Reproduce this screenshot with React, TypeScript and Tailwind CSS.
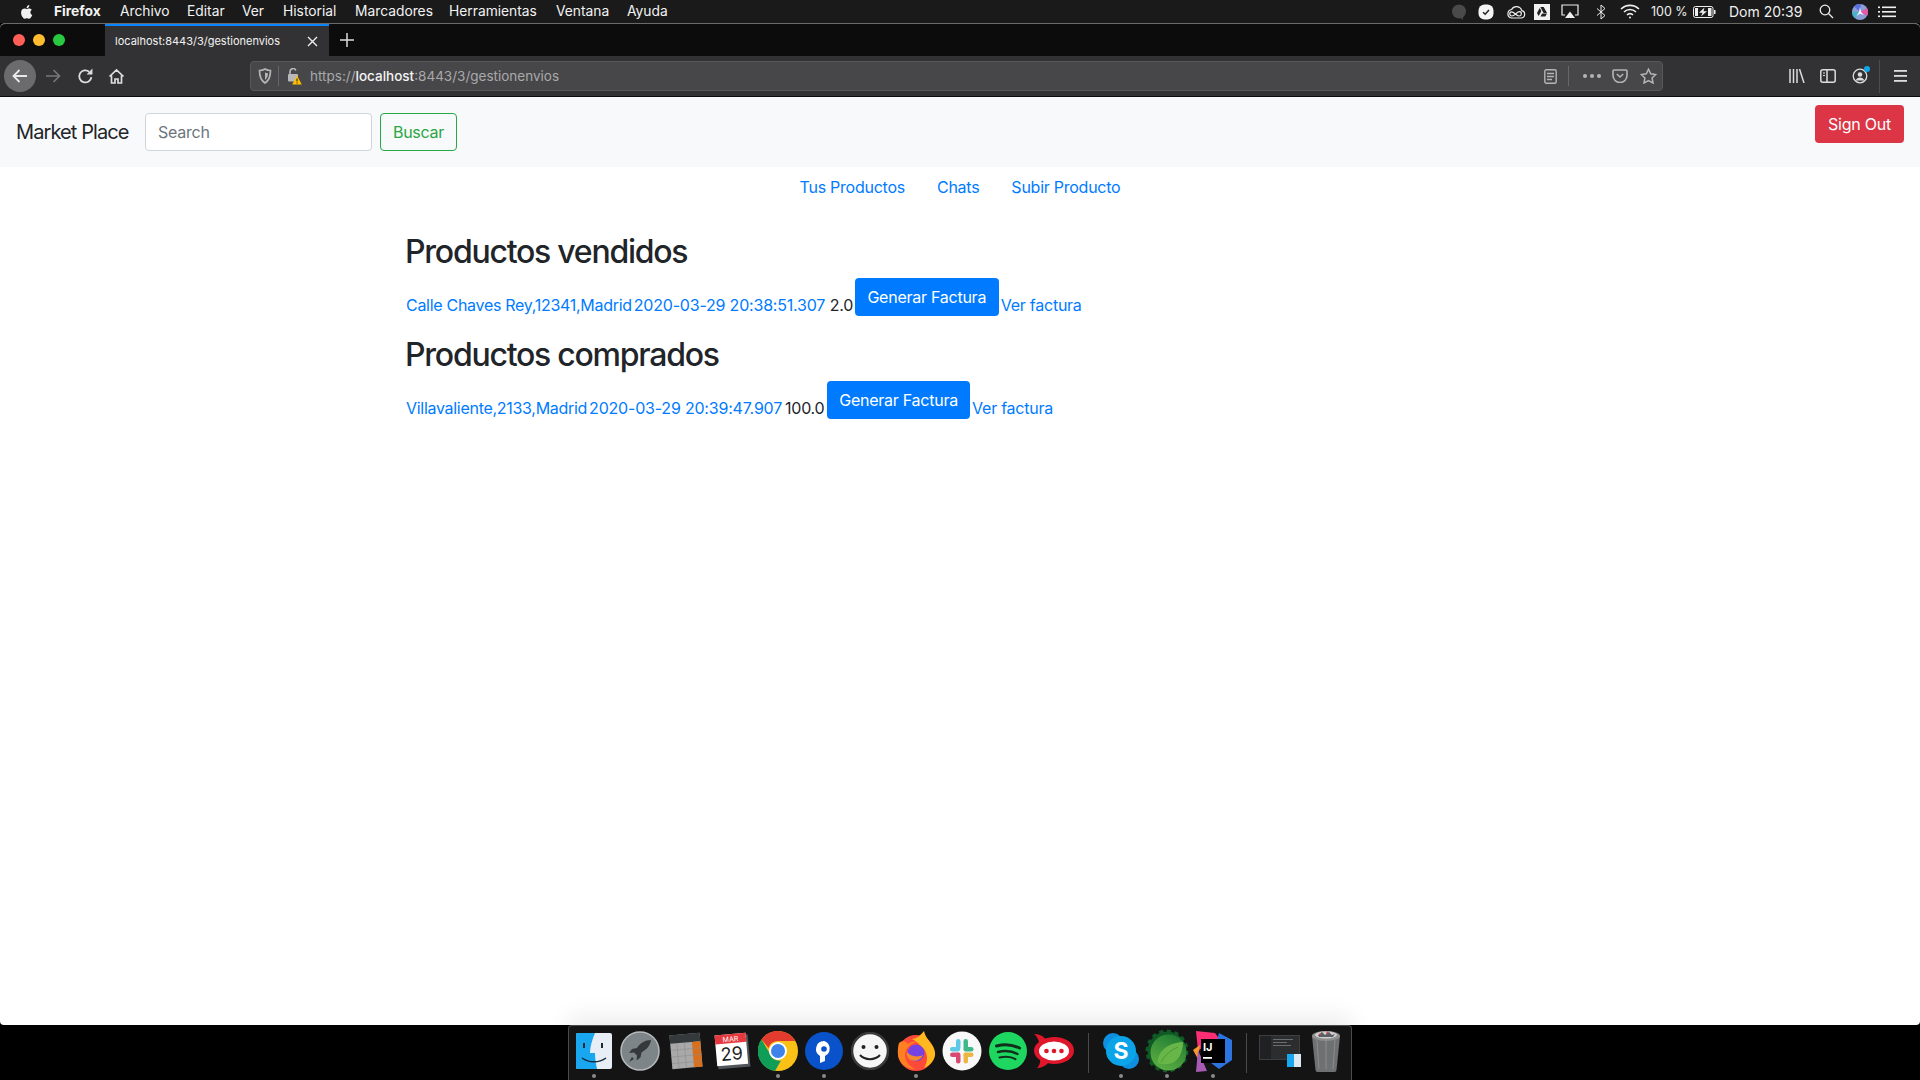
import React from 'react';

const MENU = [
  { label: 'Firefox', cls: 'w-[66px] font-bold' },
  { label: 'Archivo', cls: 'w-[67px]' },
  { label: 'Editar', cls: 'w-[55px]' },
  { label: 'Ver', cls: 'w-[41px]' },
  { label: 'Historial', cls: 'w-[72px]' },
  { label: 'Marcadores', cls: 'w-[94px]' },
  { label: 'Herramientas', cls: 'w-[107px]' },
  { label: 'Ventana', cls: 'w-[71px]' },
  { label: 'Ayuda', cls: 'w-[60px]' },
];

const Apple = () => (
  <svg width="16" height="18" viewBox="0 0 24 24" fill="#f2f2f2">
    <path d="M17.05 12.54c-.03-2.6 2.12-3.85 2.22-3.91-1.21-1.77-3.09-2.01-3.76-2.04-1.6-.16-3.12.94-3.93.94-.81 0-2.06-.92-3.39-.89-1.74.03-3.35 1.01-4.25 2.57-1.81 3.14-.46 7.8 1.3 10.35.86 1.25 1.89 2.65 3.24 2.6 1.3-.05 1.79-.84 3.36-.84 1.57 0 2.01.84 3.39.81 1.4-.02 2.28-1.27 3.14-2.53.99-1.45 1.4-2.85 1.42-2.93-.03-.01-2.72-1.04-2.74-4.13zM14.47 4.9c.72-.87 1.2-2.08 1.07-3.28-1.03.04-2.28.69-3.02 1.55-.66.77-1.24 2-1.09 3.18 1.15.09 2.32-.58 3.04-1.45z" />
  </svg>
);

const StatusIcons = () => (
  <div className="flex items-center h-full text-[#f0f0f0]">
    <svg className="w-[16px] h-[16px] mr-[11px]" viewBox="0 0 16 16"><circle cx="8" cy="7.500" r="7" fill="#4a4a4a" /><path d="M8 12l4 4v-6z" fill="#4a4a4a" /></svg>
    <svg className="w-[16px] h-[16px] mr-[12px]" viewBox="0 0 16 16"><rect x="0.500" y="0.500" width="15" height="15" rx="6" fill="#f4f4f4" /><path d="M5 8.200l2.200 2L11 6" fill="none" stroke="#222" strokeWidth="1.500" /></svg>
    <svg className="w-[20px] h-[14px] mr-[8px]" viewBox="0 0 20 14" fill="none" stroke="#eee" strokeWidth="1.200"><path d="M5.500 13h9.500a3.700 3.700 0 0 0 .8-7.300A5.500 5.500 0 0 0 5.600 4.500 4.300 4.300 0 0 0 5.500 13z" /><path d="M5.800 11c-2.400 0-3-3.700-.3-4.200 2.500-.4 4.500 4.200 7.500 4.200 2.800 0 3.200-4 .6-4.400-2.600-.4-4.600 4.400-7.800 4.400z" /></svg>
    <svg className="w-[16px] h-[16px] mr-[11px]" viewBox="0 0 16 16"><rect width="16" height="16" fill="#f2f2f2" /><path d="M6.300 3h3.400l3.300 6H9.600zM5.700 4l1.700 3-2.700 5-1.700-3zM6.500 12.500l1.600-3H13l-1.700 3z" fill="#222" /></svg>
    <svg className="w-[18px] h-[15px] mr-[17px]" viewBox="0 0 18 15"><path d="M4 11H1V1h16v10h-3" fill="none" stroke="#eee" strokeWidth="1.200" /><path d="M9 7.500l5 6.500H4z" fill="#eee" /></svg>
    <svg className="w-[10px] h-[16px] mr-[14px]" viewBox="0 0 10 16" fill="none" stroke="#eee" strokeWidth="1"><path d="M1 4.500l8 7L5 15V1l4 3.500-8 7" /></svg>
    <svg className="w-[20px] h-[15px] mr-[10px]" viewBox="0 0 20 15" fill="none" stroke="#eee" strokeWidth="1.600"><path d="M1 5a13 13 0 0 1 18 0M4 8a8.500 8.500 0 0 1 12 0M7 11a4 4 0 0 1 6 0" /><circle cx="10" cy="13.500" r="1" fill="#eee" stroke="none" /></svg>
    <span className="text-[12.500px] w-[42px] whitespace-nowrap ml-[1px] mt-[1px]">100 %</span>
    <svg className="w-[23px] h-[12px] mr-[13px]" viewBox="0 0 23 12"><rect x="0.500" y="0.500" width="19.500" height="11" rx="2" fill="none" stroke="#eee" /><rect x="21" y="4" width="1.500" height="4" fill="#eee" /><path d="M11.500 1.500L6 6.800h3.500L8 10.500l6-5.300h-3.500z" fill="#eee" /><rect x="2" y="2" width="3" height="8" fill="#eee" /><rect x="15" y="2" width="3.500" height="8" fill="#eee" /></svg>
    <span className="text-[14px] w-[90px] whitespace-nowrap">Dom 20:39</span>
    <svg className="w-[15px] h-[15px] mr-[18px]" viewBox="0 0 15 15" fill="none" stroke="#eee" strokeWidth="1.300"><circle cx="6" cy="6" r="4.800" /><path d="M9.500 9.500L14 14" /></svg>
    <svg className="w-[16px] h-[16px] mr-[10px]" viewBox="0 0 16 16">
      <circle cx="8" cy="8" r="8" fill="#8a9fd8" /><path d="M8 8L2 2.500A8 8 0 0 1 9 0z" fill="#5a6fe0" /><path d="M8 8l7-4a8 8 0 0 1 0 8z" fill="#e05aa8" /><path d="M8 8l-5 6.300A8 8 0 0 1 0 8z" fill="#48b0c8" /><path d="M8 3l1 5 3 3-4-1.500L4.500 12 7 8z" fill="#fff" />
    </svg>
    <svg className="w-[18px] h-[12px]" viewBox="0 0 18 12" fill="#f0f0f0"><rect x="0" y="0.500" width="2" height="1.600" /><rect x="4" y="0.500" width="14" height="1.600" /><rect x="0" y="5" width="2" height="1.600" /><rect x="4" y="5" width="14" height="1.600" /><rect x="0" y="9.500" width="2" height="1.600" /><rect x="4" y="9.500" width="14" height="1.600" /></svg>
  </div>
);

const Toolbar = () => (
  <div className="h-[41px] bg-[#323234] border-b border-[#0c0c0d] flex items-center shrink-0">
    <div className="w-[250px] flex items-center pl-[4px] h-full shrink-0">
      <div className="w-[32px] h-[32px] rounded-full bg-[#6b6b6e] flex items-center justify-center">
        <svg width="18" height="18" viewBox="0 0 18 18" fill="none" stroke="#e8e8e8" strokeWidth="1.800"><path d="M16 9H2.500M8.500 3L2.500 9l6 6" /></svg>
      </div>
      <svg className="ml-[8px]" width="18" height="18" viewBox="0 0 18 18" fill="none" stroke="#77777a" strokeWidth="1.700"><path d="M2 9h13.500M9.500 3l6 6-6 6" /></svg>
      <svg className="ml-[15px]" width="17" height="17" viewBox="0 0 16 16" fill="none" stroke="#ddd" strokeWidth="1.700"><path d="M13.500 8.500A5.700 5.700 0 1 1 11.500 3.500" /><path d="M14.500 .5v5.500H9z" fill="#ddd" stroke="none" /></svg>
      <svg className="ml-[14px]" width="17" height="17" viewBox="0 0 17 17" fill="none" stroke="#ddd" strokeWidth="1.700"><path d="M1.500 8.500l7-6.500 7 6.500M3.500 7.500V15h3.500v-4h3v4h3.500V7.500" /></svg>
    </div>
    <div className="w-[1413px] h-[30px] bg-[#474749] rounded-[4px] border border-[#58585a] flex items-center shrink-0">
      <svg className="ml-[7px]" width="14" height="16" viewBox="0 0 14 16" fill="none" stroke="#b4b4b6" strokeWidth="1.700"><path d="M1.500 2.500C4 2.500 5.500 2 7 1c1.500 1 3 1.500 5.500 1.500 0 6-1.500 10-5.500 12.500-4-2.500-5.500-6.500-5.500-12.500z" /><path d="M7 4.500c1 .5 2 .8 3 .8 0 3-.8 5-3 6.700z" fill="#b4b4b6" stroke="none" /></svg>
      <div className="w-px h-[20px] bg-[#66666a] ml-[6px]" />
      <div className="relative ml-[8px] w-[15px] h-[17px]">
        <svg width="12" height="14" viewBox="0 0 12 14" fill="none" stroke="#b8b8ba" strokeWidth="1.600"><rect x="1" y="6" width="10" height="7.500" rx="1" fill="#b8b8ba" stroke="none" /><path d="M3 6V3.500a3 3 0 0 1 5.800-1" /></svg>
        <svg className="absolute right-0 bottom-0" width="10" height="10" viewBox="0 0 10 10"><path d="M5 .5L9.800 9.500H.2z" fill="#ffbf00" /><path d="M5 3.500v3M5 7.500v1" stroke="#222" strokeWidth="1" /></svg>
      </div>
      <div className="ml-[8px] text-[13.500px] text-[#a9a9ac] whitespace-nowrap flex-1 mt-[1px]">
        https://<span className="text-[#f4f4f4] font-medium">localhost</span>:8443/3/gestionenvios
      </div>
      <svg width="13" height="15" viewBox="0 0 13 15" fill="none" stroke="#b4b4b6" strokeWidth="1.400" className="mr-[11px]"><rect x="0.800" y="0.800" width="11.400" height="13.400" rx="1.500" /><path d="M3 4.500h7M3 7.500h7M3 10.500h5" /></svg>
      <div className="w-px h-[20px] bg-[#66666a] mr-[14px]" />
      <div className="flex gap-[3px] mr-[11px]">
        <div className="w-[4px] h-[4px] rounded-full bg-[#b4b4b6]" />
        <div className="w-[4px] h-[4px] rounded-full bg-[#b4b4b6]" />
        <div className="w-[4px] h-[4px] rounded-full bg-[#b4b4b6]" />
      </div>
      <svg width="16" height="14" viewBox="0 0 16 14" fill="none" stroke="#b4b4b6" strokeWidth="1.600" className="mr-[12px]"><path d="M2 1h12a1 1 0 0 1 1 1v4.500a7 7 0 0 1-14 0V2a1 1 0 0 1 1-1z" /><path d="M4.800 5L8 8l3.200-3" /></svg>
      <svg width="17" height="16" viewBox="0 0 17 16" fill="none" stroke="#b4b4b6" strokeWidth="1.500" className="mr-[5px]"><path d="M8.500 1.200l2.200 4.600 5 .7-3.600 3.500.9 5-4.500-2.400L4 15l.9-5L1.300 6.500l5-.7z" /></svg>
    </div>
    <div className="flex items-center flex-1 h-full">
      <svg className="ml-[126px]" width="16" height="14" viewBox="0 0 16 14" fill="none" stroke="#ddd" strokeWidth="1.500"><path d="M1 0v14M4.500 0v14M8 0v14M10.500 0l4.500 14" /></svg>
      <svg className="ml-[15px]" width="16" height="14" viewBox="0 0 16 14" fill="none" stroke="#ddd" strokeWidth="1.500"><rect x="0.800" y="0.800" width="14.400" height="12.400" rx="2" /><path d="M7 1v12" /><path d="M3 4h2M3 6.500h2" strokeWidth="1" /></svg>
      <div className="relative ml-[16px] w-[16px] h-[16px]">
        <svg width="16" height="16" viewBox="0 0 16 16" fill="none" stroke="#ddd" strokeWidth="1.300"><circle cx="8" cy="8" r="6.800" /><circle cx="8" cy="6.500" r="2.300" fill="#ddd" stroke="none" /><path d="M3.500 12.500c1-2 2.500-3 4.500-3s3.500 1 4.500 3" fill="#ddd" stroke="none" /></svg>
        <div className="absolute -top-[2px] -right-[2px] w-[6px] h-[6px] rounded-full bg-[#0ea5e9]" />
      </div>
      <div className="w-px h-[33px] bg-[#4c4c4f] ml-[11px]" />
      <svg className="ml-[14px]" width="13" height="12" viewBox="0 0 13 12" fill="#ddd"><rect width="13" height="1.800" /><rect y="5" width="13" height="1.800" /><rect y="10" width="13" height="1.800" /></svg>
    </div>
  </div>
);

// dock icons
const Finder = () => (
  <svg width="36" height="36" viewBox="0 0 36 36">
    <rect width="36" height="36" rx="2" fill="#e8eef6" />
    <path d="M0 2a2 2 0 0 1 2-2h17c-3 7-5 14-5 20h5c0 6 1 11 2 16H2a2 2 0 0 1-2-2z" fill="#19a7f0" />
    <path d="M8 10v5M26 10v5" stroke="#1a2a3a" strokeWidth="2" />
    <path d="M6 25c7 5 17 5 24 0" stroke="#1a2a3a" strokeWidth="1.500" fill="none" />
  </svg>
);
const Launchpad = () => (
  <svg width="40" height="40" viewBox="0 0 40 40">
    <circle cx="20" cy="20" r="19" fill="#7e8589" stroke="#b6babc" strokeWidth="1.500" />
    <path d="M31 9c-6 0-11 3-14 8l-5 1-3 4 5-.5 3 3-.5 5 4-3 1-5c5-3 9-7 9.500-12.500z" fill="#35393c" />
    <path d="M12 26l-3 5 5-3z" fill="#35393c" />
  </svg>
);
const Calculator = () => (
  <svg width="34" height="38" viewBox="0 0 36 40" style={{ transform: 'rotate(-5deg)' }}>
    <rect x="2" y="2" width="32" height="36" fill="#a9a9a9" />
    <rect x="2" y="2" width="32" height="9" fill="#34393b" />
    <rect x="25" y="11" width="9" height="27" fill="#d9701e" />
    <path d="M9 11v27M17 11v27M25 18h9M25 25h9M25 32h9M2 18h23M2 25h23M2 32h23" stroke="#8d8d8d" strokeWidth="0.600" />
  </svg>
);
const Calendar = () => (
  <svg width="36" height="38" viewBox="0 0 36 38" style={{ transform: 'rotate(-5deg)' }}>
    <rect x="3" y="4" width="32" height="32" fill="#50565c" />
    <rect x="2" y="2" width="31" height="31" fill="#fff" />
    <rect x="2" y="2" width="31" height="9" fill="#e5393f" />
    <text x="17.500" y="9.500" textAnchor="middle" fontSize="7" fill="#fff" fontFamily="Inter, sans-serif">MAR</text>
    <text x="17.500" y="28" textAnchor="middle" fontSize="18" fill="#222" fontFamily="Inter, sans-serif">29</text>
  </svg>
);
const Chrome = () => (
  <svg width="40" height="40" viewBox="0 0 40 40">
    <circle cx="20" cy="20" r="20" fill="#fbc116" />
    <path d="M20 0a20 20 0 0 1 17.300 10H20a10 10 0 0 0-9.500 7L3.500 8.500A20 20 0 0 1 20 0z" fill="#e33b2e" />
    <path d="M3.500 8.500l8 13.500a10 10 0 0 0 11.500 7.600L17 40A20 20 0 0 1 3.500 8.500z" fill="#109d58" />
    <circle cx="20" cy="20" r="9" fill="#fff" />
    <circle cx="20" cy="20" r="7" fill="#3f83ea" />
  </svg>
);
const Sourcetree = () => (
  <svg width="38" height="38" viewBox="0 0 38 38">
    <circle cx="19" cy="19" r="19" fill="#0a52c9" />
    <path d="M19 9a8 8 0 0 0-4 14.900V31l5 -2v-5.100A8 8 0 0 0 19 9z" fill="#fff" />
    <circle cx="19" cy="17" r="2.800" fill="#0a52c9" />
  </svg>
);
const Smile = () => (
  <svg width="38" height="38" viewBox="0 0 38 38">
    <circle cx="19" cy="19" r="18" fill="#f6f6f6" stroke="#3a3a3a" strokeWidth="2.500" />
    <circle cx="12.500" cy="15" r="2" fill="#222" />
    <circle cx="25.500" cy="15" r="2" fill="#222" />
    <path d="M9 23c5 5.500 15 5.500 20 0" fill="none" stroke="#222" strokeWidth="2" />
  </svg>
);
const Firefox = () => (
  <svg width="40" height="40" viewBox="0 0 40 40">
    <circle cx="20" cy="22" r="18" fill="#ff4a3a" />
    <path d="M28 0C24 5 20 8 16 8c4 2 8 6 12 10 4 6 4 12 0 19 7-3 12-9 11-16C38 13 30 9 28 0z" fill="#ffb81f" />
    <path d="M3 12c3-3 7-2 9 1 3-2 6-3 8-2-6 2-11 7-11 13 0 6 4 11 10 14C10 38 3 32 2 24c-.5-4 0-9 1-12z" fill="#ff8020" />
    <circle cx="20" cy="22" r="8.500" fill="#7543e3" />
    <path d="M11 21c3 4 10 6 16 3-2 5-8 7-12 5-3-1-5-5-4-8z" fill="#f58a2c" />
  </svg>
);
const Slack = () => (
  <svg width="40" height="40" viewBox="0 0 40 40">
    <circle cx="20" cy="20" r="19.500" fill="#f8f8f8" />
    <rect x="14" y="8" width="4.500" height="11" rx="2.250" fill="#5ec8e8" />
    <rect x="8" y="16" width="10" height="4.500" rx="2.250" fill="#5ec8e8" />
    <rect x="21.500" y="8" width="4.500" height="11" rx="2.250" fill="#3fb98a" />
    <rect x="21.500" y="16" width="10" height="4.500" rx="2.250" fill="#3fb98a" />
    <rect x="21.500" y="21.500" width="10" height="4.500" rx="2.250" fill="#ecb644" />
    <rect x="21.500" y="21.500" width="4.500" height="11" rx="2.250" fill="#ecb644" />
    <rect x="8" y="21.500" width="10" height="4.500" rx="2.250" fill="#d94a72" />
    <rect x="14" y="21.500" width="4.500" height="11" rx="2.250" fill="#d94a72" />
  </svg>
);
const Spotify = () => (
  <svg width="38" height="38" viewBox="0 0 38 38">
    <circle cx="19" cy="19" r="19" fill="#1ed760" />
    <g fill="none" stroke="#10301c" strokeLinecap="round">
      <path d="M7.500 14c7-2 16-1.500 23 2" strokeWidth="3" />
      <path d="M9 20c6-1.500 14-1 19.500 2" strokeWidth="2.500" />
      <path d="M10.500 25.500c5-1 12-.8 16 1.700" strokeWidth="2" />
    </g>
  </svg>
);
const RocketChat = () => (
  <svg width="42" height="36" viewBox="0 0 42 36">
    <path d="M21 4c11 0 20 5.500 20 13.500S32 31 21 31c-2 0-4-.3-6-.8C12 33 8 35 4 35c2.500-2.500 3.500-5.500 3-8C3 24.500 1 21 1 17.500 1 14 3 11 6 9 5 6 4 3 1 1c4 0 8 1 11 4.500 3-1 6-1.500 9-1.500z" fill="#e0162b" />
    <ellipse cx="21" cy="18" rx="15" ry="9.500" fill="#fff" />
    <circle cx="13.500" cy="18" r="2.300" fill="#e0162b" />
    <circle cx="21" cy="18" r="2.300" fill="#e0162b" />
    <circle cx="28.500" cy="18" r="2.300" fill="#e0162b" />
  </svg>
);
const Skype = () => (
  <svg width="36" height="36" viewBox="0 0 36 36">
    <circle cx="10" cy="10" r="10" fill="#0e8fe0" />
    <circle cx="26" cy="26" r="10" fill="#0e8fe0" />
    <circle cx="18" cy="18" r="15" fill="#0ca4e8" />
    <text x="18" y="26" textAnchor="middle" fontSize="23" fontWeight="700" fill="#fff" fontFamily="Inter, sans-serif">S</text>
  </svg>
);
const Spring = () => (
  <svg width="44" height="44" viewBox="0 0 44 44">
    <defs>
      <linearGradient id="springBody" x1="0.800" y1="0" x2="0.300" y2="1">
        <stop offset="0" stopColor="#1d7a32" />
        <stop offset="1" stopColor="#5dae42" />
      </linearGradient>
    </defs>
    <circle cx="22" cy="22" r="19.500" fill="#0f5a25" strokeDasharray="4 3.600" stroke="#0f5a25" strokeWidth="4" />
    <circle cx="23.500" cy="23.500" r="18" fill="url(#springBody)" />
    <path d="M13 34c-1-10 8-20 25-21 0 11-5 21-15 22-4 .4-8 0-10-1z" fill="#68b647" />
    <path d="M16 33c4-7 10-12 17-15" fill="none" stroke="#4a9a38" strokeWidth="1" />
  </svg>
);
const Intellij = () => (
  <svg width="42" height="42" viewBox="0 0 42 42">
    <path d="M4 1l19 2 6 8L6 20z" fill="#fe2e75" />
    <path d="M27 3l13 7v20l-13 9-8-6z" fill="#2c74e0" />
    <path d="M1 20l7-5-2 14z" fill="#fb9a2c" />
    <path d="M6 20l9 21-11 1z" fill="#a75bb4" />
    <rect x="9" y="9" width="24" height="24" fill="#000" />
    <text x="11" y="21" fontSize="11" fontWeight="700" fill="#fff" fontFamily="Inter, sans-serif">IJ</text>
    <rect x="11" y="27" width="9" height="1.800" fill="#fff" />
  </svg>
);
const WindowThumb = () => (
  <div className="relative w-[42px] h-[32px]">
    <div className="absolute left-0 top-0 w-[41px] h-[25px] bg-[#2b2d2f] border border-[#3c3e40] flex">
      <div className="w-[11px] h-full bg-[#202123]" />
      <div className="flex-1 flex flex-col gap-[2px] pl-[2px] pt-[3px]">
        <div className="w-[20px] h-px bg-[#6a6c6e]" />
        <div className="w-[14px] h-px bg-[#6a6c6e]" />
        <div className="w-[18px] h-px bg-[#6a6c6e]" />
      </div>
    </div>
    <div className="absolute right-0 bottom-0 w-[14px] h-[13px] bg-[#dfe9f4]">
      <div className="w-[7px] h-full bg-[#19a7f0]" />
    </div>
  </div>
);
const Trash = () => (
  <svg width="30" height="44" viewBox="0 0 30 44">
    <path d="M1 7h28l-3.500 34a2 2 0 0 1-2 2h-17a2 2 0 0 1-2-2z" fill="#6e7072" />
    <path d="M6 11l2 29M15 11v29M24 11l-2 29" stroke="#8b8d8f" strokeWidth="1" />
    <ellipse cx="15" cy="7" rx="14" ry="5" fill="#8c8e90" />
    <ellipse cx="15" cy="6" rx="11" ry="3.500" fill="#d5d0d0" />
    <path d="M7 6l4-3 3 3 4-3 3 3 3-1-2 3H8z" fill="#5a5f66" />
    <path d="M16 2l2 2-3 1zM9 4l2 2-3 0z" fill="#c0504d" />
  </svg>
);

const DockItem = ({ icon, dot }: { icon: React.ReactNode; dot?: boolean }) => (
  <div className="w-[46px] h-full relative flex items-center justify-center pb-[5px]">
    {icon}
    {dot && <div className="absolute bottom-[2px] left-[21px] w-[4px] h-[4px] rounded-full bg-[#8a8a8a]" />}
  </div>
);

const Dock = () => (
  <div className="h-[55px] bg-black flex justify-center shrink-0">
    <div className="w-[784px] h-full bg-[#141414] border-t border-x border-[#4a4a4a] rounded-t-[4px] flex items-center pl-[2px] shadow-[0_-8px_24px_rgba(0,0,0,0.08)]">
      <DockItem icon={<Finder />} dot />
      <DockItem icon={<Launchpad />} />
      <DockItem icon={<Calculator />} />
      <DockItem icon={<Calendar />} />
      <DockItem icon={<Chrome />} dot />
      <DockItem icon={<Sourcetree />} dot />
      <DockItem icon={<Smile />} />
      <DockItem icon={<Firefox />} dot />
      <DockItem icon={<Slack />} />
      <DockItem icon={<Spotify />} />
      <DockItem icon={<RocketChat />} />
      <div className="w-px h-[40px] bg-[#4a4a4a] ml-[11px] mr-[9px]" />
      <DockItem icon={<Skype />} dot />
      <DockItem icon={<Spring />} dot />
      <DockItem icon={<Intellij />} dot />
      <div className="w-px h-[40px] bg-[#4a4a4a] ml-[10px] mr-[10px]" />
      <DockItem icon={<WindowThumb />} />
      <DockItem icon={<Trash />} />
    </div>
  </div>
);

const Shipment = ({ address, date, total, dateCls, totalCls, btnCls, verCls }: { address: string; date: string; total: string; dateCls: string; totalCls: string; btnCls: string; verCls: string }) => (
  <div className="flex items-end h-[38px] mb-[19px] pl-[1px]">
    <a className="text-[#007bff] text-[16px] leading-[24px] mb-[-1px] tracking-[-0.29px] whitespace-nowrap">{address}</a>
    <a className={`text-[#007bff] text-[16px] leading-[24px] mb-[-1px] tracking-[-0.2px] whitespace-nowrap ${dateCls}`}>{date}</a>
    <span className={`text-[#212529] text-[16px] leading-[24px] mb-[-1px] tracking-[-0.25px] ${totalCls}`}>{total}</span>
    <button className={`bg-[#007bff] text-white text-[16px] h-[38px] rounded-[4px] self-start tracking-[-0.25px] whitespace-nowrap ${btnCls}`}>Generar Factura</button>
    <a className={`text-[#007bff] text-[16px] leading-[24px] mb-[-1px] tracking-[-0.25px] whitespace-nowrap ${verCls}`}>Ver factura</a>
  </div>
);

export default function App() {
  return (
    <div className="w-[1920px] h-[1080px] overflow-hidden bg-black flex flex-col font-['Inter',sans-serif]">
      {/* mac menu bar */}
      <div className="h-[23px] bg-[#1a1a1a] flex items-center justify-between pl-[19px] pr-[24px] text-[13.800px] text-[#f2f2f2] shrink-0">
        <div className="flex items-center">
          <div className="w-[35px] flex"><Apple /></div>
          {MENU.map((m) => (
            <span key={m.label} className={`${m.cls} whitespace-nowrap`}>{m.label}</span>
          ))}
        </div>
        <StatusIcons />
      </div>

      {/* window */}
      <div className="flex-1 flex flex-col bg-white rounded-t-[5px] rounded-b-[4px] overflow-hidden border-t border-[#6a6a6a]">
        <div className="h-[32px] bg-[#0c0c0d] flex items-stretch shrink-0">
          <div className="w-[105px] flex items-center gap-[8px] pl-[13px] shrink-0">
            <div className="w-[12px] h-[12px] rounded-full bg-[#ff5f57]" />
            <div className="w-[12px] h-[12px] rounded-full bg-[#febc2e]" />
            <div className="w-[12px] h-[12px] rounded-full bg-[#28c840]" />
          </div>
          <div className="w-[224px] bg-[#323234] border-t-2 border-[#0a84ff] flex items-center pl-[10px] shrink-0">
            <span className="text-[#f2f2f2] text-[11px] flex-1 whitespace-nowrap">localhost:8443/3/gestionenvios</span>
            <svg className="mr-[11px]" width="11" height="11" viewBox="0 0 11 11" stroke="#eee" strokeWidth="1.400"><path d="M1 1l9 9M10 1l-9 9" /></svg>
          </div>
          <svg className="ml-[11px] self-center" width="14" height="14" viewBox="0 0 14 14" stroke="#ddd" strokeWidth="1.500"><path d="M7 0v14M0 7h14" /></svg>
        </div>
        <Toolbar />

        {/* page */}
        <nav className="h-[70px] bg-[#f8f9fa] flex items-start justify-between pl-[16px] pr-[16px] shrink-0">
          <div className="flex items-center h-full">
            <span className="text-[20px] text-[#212529] tracking-[-0.9px] w-[129px] whitespace-nowrap">Market Place</span>
            <input placeholder="Search" className="w-[227px] h-[38px] bg-white border border-[#ced4da] rounded-[4px] px-[12px] text-[16px] placeholder:text-[#6c757d] tracking-[-0.25px]" />
            <button className="ml-[8px] w-[77px] h-[38px] border border-[#28a745] rounded-[4px] text-[#28a745] text-[16px] tracking-[-0.25px]">Buscar</button>
          </div>
          <button className="mt-[8px] w-[89px] h-[38px] bg-[#dc3545] rounded-[4px] text-white text-[16px] tracking-[-0.25px]">Sign Out</button>
        </nav>

        <div className="h-[40px] flex items-center justify-center text-[#007bff] text-[16px] tracking-[-0.25px] shrink-0">
          <a className="px-[16px] whitespace-nowrap">Tus Productos</a>
          <a className="px-[16px] whitespace-nowrap">Chats</a>
          <a className="px-[16px] whitespace-nowrap">Subir Producto</a>
        </div>

        <div className="w-[1140px] mx-auto px-[15px] pt-[25px]">
          <h2 className="text-[32px] font-medium leading-[40px] mb-[6px] text-[#212529] tracking-[-1.25px]">Productos vendidos</h2>
          <Shipment address="Calle Chaves Rey,12341,Madrid" date="2020-03-29 20:38:51.307" total="2.0" dateCls="ml-[2px] w-[196px]" totalCls="w-[25px]" btnCls="w-[144px]" verCls="ml-[2px]" />
          <h2 className="text-[32px] font-medium leading-[40px] mb-[6px] text-[#212529] tracking-[-1.25px]">Productos comprados</h2>
          <Shipment address="Villavaliente,2133,Madrid" date="2020-03-29 20:39:47.907" total="100.0" dateCls="ml-[2px] w-[196px]" totalCls="w-[42px]" btnCls="w-[143px]" verCls="ml-[2px]" />
        </div>
      </div>

      <Dock />
    </div>
  );
}
